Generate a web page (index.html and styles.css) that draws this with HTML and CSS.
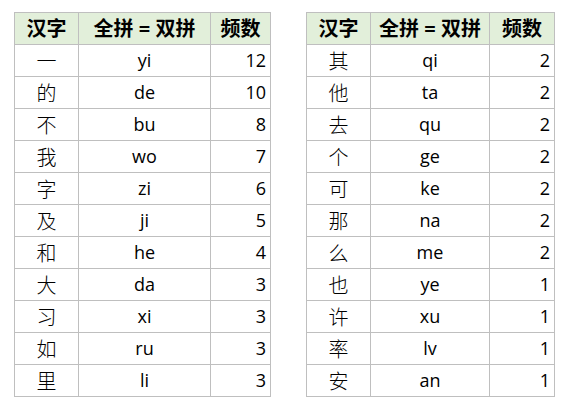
FILE: index.html
```html
<!DOCTYPE html>
<html lang="zh">
<head>
<meta charset="utf-8">
<link rel="stylesheet" href="styles.css">
</head>
<body>
<div class="wrap">
<table class="t t-left">
<colgroup><col class="c1"><col class="c2"><col class="c3"></colgroup>
<thead><tr><th>汉字</th><th>全拼 = 双拼</th><th>频数</th></tr></thead>
<tbody>
<tr><td>一</td><td class="p">yi</td><td class="n">12</td></tr>
<tr><td>的</td><td class="p">de</td><td class="n">10</td></tr>
<tr><td>不</td><td class="p">bu</td><td class="n">8</td></tr>
<tr><td>我</td><td class="p">wo</td><td class="n">7</td></tr>
<tr><td>字</td><td class="p">zi</td><td class="n">6</td></tr>
<tr><td>及</td><td class="p">ji</td><td class="n">5</td></tr>
<tr><td>和</td><td class="p">he</td><td class="n">4</td></tr>
<tr><td>大</td><td class="p">da</td><td class="n">3</td></tr>
<tr><td>习</td><td class="p">xi</td><td class="n">3</td></tr>
<tr><td>如</td><td class="p">ru</td><td class="n">3</td></tr>
<tr><td>里</td><td class="p">li</td><td class="n">3</td></tr>
</tbody>
</table>
<table class="t t-right">
<colgroup><col class="c1"><col class="c2"><col class="c3"></colgroup>
<thead><tr><th>汉字</th><th>全拼 = 双拼</th><th>频数</th></tr></thead>
<tbody>
<tr><td>其</td><td class="p">qi</td><td class="n">2</td></tr>
<tr><td>他</td><td class="p">ta</td><td class="n">2</td></tr>
<tr><td>去</td><td class="p">qu</td><td class="n">2</td></tr>
<tr><td>个</td><td class="p">ge</td><td class="n">2</td></tr>
<tr><td>可</td><td class="p">ke</td><td class="n">2</td></tr>
<tr><td>那</td><td class="p">na</td><td class="n">2</td></tr>
<tr><td>么</td><td class="p">me</td><td class="n">2</td></tr>
<tr><td>也</td><td class="p">ye</td><td class="n">1</td></tr>
<tr><td>许</td><td class="p">xu</td><td class="n">1</td></tr>
<tr><td>率</td><td class="p">lv</td><td class="n">1</td></tr>
<tr><td>安</td><td class="p">an</td><td class="n">1</td></tr>
</tbody>
</table>
</div>
</body>
</html>
```
FILE: styles.css
```css
html, body {
  margin: 0;
  padding: 0;
  background: #ffffff;
}
body {
  font-family: "Noto Sans CJK SC", sans-serif;
  color: #000;
}
.wrap {
  display: flex;
  gap: 35px;
  padding: 12px 0 0 14px;
}
.t {
  border-collapse: collapse;
  table-layout: fixed;
  font-size: 20px;
  font-weight: 300;
}
.t th, .t td {
  border: 1px solid #bfbfbf;
  height: 31px;
  padding: 0 4px;
  text-align: center;
  line-height: 31px;
  box-sizing: border-box;
  white-space: nowrap;
  overflow: hidden;
}
.t tr { height: 32px; }
.t th {
  background: #e2efda;
  font-weight: bold;
  font-size: 20px;
  font-family: "Open Sans", "Noto Sans CJK SC", sans-serif;
}
.t td.p, .t td.n {
  font-family: "Open Sans", sans-serif;
  font-size: 18px;
  font-weight: 400;
}
.t td.n { text-align: right; padding-right: 4px; }
.t-left { width: 256px; }
.t-left .c1 { width: 64px; }
.t-left .c2 { width: 132px; }
.t-left .c3 { width: 60px; }
.t-right { width: 248px; }
.t-right .c1 { width: 64px; }
.t-right .c2 { width: 119px; }
.t-right .c3 { width: 65px; }
```
